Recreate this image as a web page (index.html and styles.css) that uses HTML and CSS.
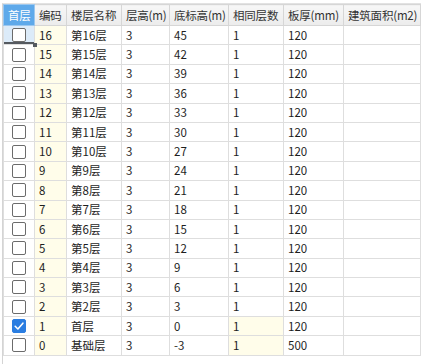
FILE: index.html
```html
<!DOCTYPE html>
<html>
<head>
<meta charset="utf-8">
<link rel="stylesheet" href="styles.css">
</head>
<body>
<div class="frame">
<table class="grid">
<colgroup>
<col class="c1"><col class="c2"><col class="c3"><col class="c4"><col class="c5"><col class="c6"><col class="c7"><col class="c8">
</colgroup>
<thead>
<tr>
<th class="first">首层</th><th>编码</th><th>楼层名称</th><th>层高(m)</th><th>底标高(m)</th><th>相同层数</th><th>板厚(mm)</th><th>建筑面积(m2)</th>
</tr>
</thead>
<tbody>
<tr><td class="chk sel"><span class="box"></span><span class="corner"></span></td><td class="code">16</td><td>第16层</td><td>3</td><td>45</td><td>1</td><td>120</td><td></td></tr>
<tr><td class="chk"><span class="box"></span></td><td class="code">15</td><td>第15层</td><td>3</td><td>42</td><td>1</td><td>120</td><td></td></tr>
<tr><td class="chk"><span class="box"></span></td><td class="code">14</td><td>第14层</td><td>3</td><td>39</td><td>1</td><td>120</td><td></td></tr>
<tr><td class="chk"><span class="box"></span></td><td class="code">13</td><td>第13层</td><td>3</td><td>36</td><td>1</td><td>120</td><td></td></tr>
<tr><td class="chk"><span class="box"></span></td><td class="code">12</td><td>第12层</td><td>3</td><td>33</td><td>1</td><td>120</td><td></td></tr>
<tr><td class="chk"><span class="box"></span></td><td class="code">11</td><td>第11层</td><td>3</td><td>30</td><td>1</td><td>120</td><td></td></tr>
<tr><td class="chk"><span class="box"></span></td><td class="code">10</td><td>第10层</td><td>3</td><td>27</td><td>1</td><td>120</td><td></td></tr>
<tr><td class="chk"><span class="box"></span></td><td class="code">9</td><td>第9层</td><td>3</td><td>24</td><td>1</td><td>120</td><td></td></tr>
<tr><td class="chk"><span class="box"></span></td><td class="code">8</td><td>第8层</td><td>3</td><td>21</td><td>1</td><td>120</td><td></td></tr>
<tr><td class="chk"><span class="box"></span></td><td class="code">7</td><td>第7层</td><td>3</td><td>18</td><td>1</td><td>120</td><td></td></tr>
<tr><td class="chk"><span class="box"></span></td><td class="code">6</td><td>第6层</td><td>3</td><td>15</td><td>1</td><td>120</td><td></td></tr>
<tr><td class="chk"><span class="box"></span></td><td class="code">5</td><td>第5层</td><td>3</td><td>12</td><td>1</td><td>120</td><td></td></tr>
<tr><td class="chk"><span class="box"></span></td><td class="code">4</td><td>第4层</td><td>3</td><td>9</td><td>1</td><td>120</td><td></td></tr>
<tr><td class="chk"><span class="box"></span></td><td class="code">3</td><td>第3层</td><td>3</td><td>6</td><td>1</td><td>120</td><td></td></tr>
<tr><td class="chk"><span class="box"></span></td><td class="code">2</td><td>第2层</td><td>3</td><td>3</td><td>1</td><td>120</td><td></td></tr>
<tr><td class="chk"><span class="box checked"><svg viewBox="0 0 14 14" width="14" height="14"><path d="M3.2 7.3 L5.9 10 L10.9 4.2" fill="none" stroke="#fff" stroke-width="1.6" stroke-linecap="round" stroke-linejoin="round"/></svg></span></td><td class="code">1</td><td>首层</td><td>3</td><td>0</td><td class="code">1</td><td>120</td><td></td></tr>
<tr><td class="chk"><span class="box"></span></td><td class="code">0</td><td>基础层</td><td>3</td><td>-3</td><td class="code">1</td><td>500</td><td></td></tr>
</tbody>
</table>
</div>
</body>
</html>
```

FILE: styles.css
```css
html, body {
  margin: 0;
  padding: 0;
  background: #ffffff;
}
body {
  width: 421px;
  height: 364px;
  overflow: hidden;
  font-family: "Noto Sans CJK SC", "Microsoft YaHei", sans-serif;
  font-size: 11.5px;
  color: #1e1e1e;
}
.frame {
  margin: 3px 0 0 2px;
  border-left: 1px solid #d4d4d4;
  border-top: 1px solid #e2e2e2;
  height: 360px;
  background: #ffffff;
}
.grid {
  border-collapse: collapse;
  table-layout: fixed;
  width: 417px;
}
.c1 { width: 31px; }
.c2 { width: 32px; }
.c3 { width: 55px; }
.c4 { width: 48px; }
.c5 { width: 59px; }
.c6 { width: 55px; }
.c7 { width: 60px; }
.c8 { width: 77px; }
.grid th {
  height: 20px;
  padding: 0 0 0 4px;
  text-align: left;
  font-weight: normal;
  color: #333333;
  background: linear-gradient(#f7f7f7, #ececec);
  border: 1px solid #d6d6d6;
  white-space: nowrap;
  overflow: hidden;
  line-height: 18px;
  letter-spacing: -0.2px;
}
.grid th.first {
  background: #5ea9ea;
  color: #ffffff;
  border-color: #9cc7ee;
}
.grid td {
  height: 18.4px;
  padding: 0 0 0 4px;
  border: 1px solid #dedede;
  white-space: nowrap;
  overflow: hidden;
  line-height: 17px;
}
.grid td.code {
  background: #fffdea;
}
.grid td.chk {
  padding: 0;
  text-align: center;
  line-height: 0;
}
.grid td.sel {
  background: #dcebf9;
  box-shadow: inset 0 -2px 0 #555a60;
  position: relative;
  overflow: visible;
}
.corner {
  position: absolute;
  right: -3px;
  bottom: -3px;
  width: 4px;
  height: 4px;
  background: #555a60;
}
.box {
  display: inline-block;
  width: 12px;
  height: 12px;
  border: 1px solid #6b6b6b;
  border-radius: 2px;
  background: #ffffff;
  vertical-align: middle;
  position: relative;
}
.box.checked {
  background: #2a7de1;
  border-color: #2a7de1;
}
.box svg {
  position: absolute;
  left: -1px;
  top: -1px;
}
```
